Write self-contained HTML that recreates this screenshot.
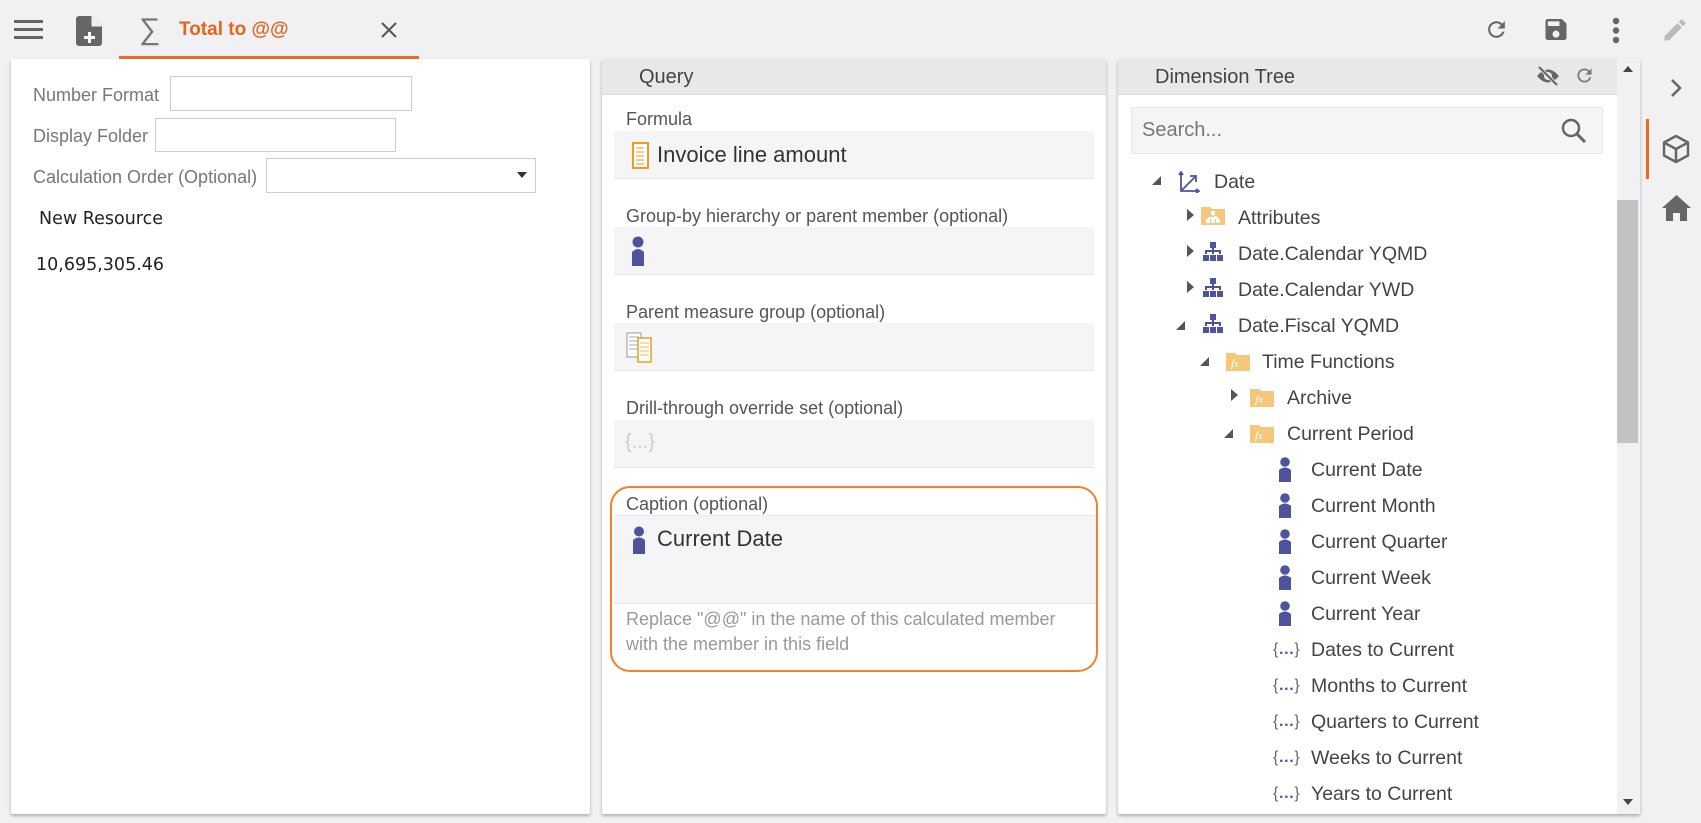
<!DOCTYPE html>
<html><head><meta charset="utf-8"><style>
*{box-sizing:border-box;margin:0;padding:0}
body{width:1701px;height:823px;background:#f1f0f2;font-family:"Liberation Sans",sans-serif;position:relative;overflow:hidden;color:#333}
.a{position:absolute}
.panel{position:absolute;background:#fff;box-shadow:0 2px 3px rgba(0,0,0,.28);border-radius:2px}
.hdr{position:absolute;left:0;right:0;top:0;height:36px;background:#e8e7ea;border-bottom:1px solid #dcdbde;font-size:20px;color:#444}
.lbl{position:absolute;font-size:18px;color:#777}
.inp{position:absolute;border:1px solid #ccc;background:#fff}
.ql{position:absolute;left:24px;font-size:18px;color:#555}
.qb{position:absolute;left:12px;width:480px;height:48px;background:#f5f4f7;border-bottom:1px solid #e6e5e8}
.row{position:absolute;font-size:19.5px;color:#444;white-space:nowrap;height:36px;line-height:36px}
.row svg{position:absolute}
.tri{position:absolute;width:0;height:0}
</style></head><body>

<svg class="a" style="left:14px;top:20px" width="29" height="20"><rect y="0" width="29" height="3" fill="#666"/><rect y="8" width="29" height="3" fill="#666"/><rect y="16" width="29" height="3" fill="#666"/></svg>
<svg class="a" style="left:76px;top:16px" width="26" height="30" viewBox="0 0 26 30"><path d="M3 0h13l10 10v17a3 3 0 0 1-3 3H3a3 3 0 0 1-3-3V3a3 3 0 0 1 3-3z" fill="#666"/><path d="M16 0v10h10" fill="#f1f0f2" stroke="#f1f0f2" stroke-width="1"/><rect x="8" y="20" width="11" height="3" fill="#fff"/><rect x="12" y="16" width="3" height="11" fill="#fff"/></svg>
<div class="a" style="left:139px;top:13px;font-size:30px;color:#777">∑</div>
<div class="a" style="left:179px;top:19px;font-size:19px;font-weight:bold;color:#e2661c">Total to @@</div>
<svg class="a" style="left:381px;top:22px" width="16" height="16"><path d="M1 1L15 15M15 1L1 15" stroke="#555" stroke-width="2"/></svg>
<div class="a" style="left:119px;top:56px;width:300px;height:3px;background:#ed6b21"></div>

<svg class="a" style="left:1484px;top:17px" width="25" height="25" viewBox="0 0 24 24"><path d="M17.6 6.4A8 8 0 1 0 19.7 14h-2.1A6 6 0 1 1 12 6c1.7 0 3.1.7 4.2 1.8L13 11h7V4z" fill="#666"/></svg>
<svg class="a" style="left:1542px;top:15px" width="28" height="29" viewBox="0 0 24 24"><path d="M17 3H5a2 2 0 0 0-2 2v14a2 2 0 0 0 2 2h14a2 2 0 0 0 2-2V7zm-5 16a3 3 0 1 1 0-6 3 3 0 0 1 0 6zm3-10H5V5h10z" fill="#666"/></svg>
<svg class="a" style="left:1612px;top:17px" width="8" height="27"><circle cx="4" cy="4" r="3.2" fill="#666"/><circle cx="4" cy="13.5" r="3.2" fill="#666"/><circle cx="4" cy="23" r="3.2" fill="#666"/></svg>
<svg class="a" style="left:1661px;top:15px" width="28" height="30" viewBox="0 0 24 24"><path d="M3 17.25V21h3.75L17.8 9.9l-3.7-3.7zM20.7 7a1 1 0 0 0 0-1.4l-2.3-2.3a1 1 0 0 0-1.4 0l-1.8 1.8 3.7 3.7z" fill="#bbb"/></svg>

<div class="panel" style="left:11px;top:59px;width:579px;height:755px">
 <div class="lbl" style="left:22px;top:26px">Number Format</div>
 <div class="inp" style="left:159px;top:17px;width:242px;height:35px"></div>
 <div class="lbl" style="left:22px;top:67px">Display Folder</div>
 <div class="inp" style="left:144px;top:59px;width:241px;height:34px"></div>
 <div class="lbl" style="left:22px;top:108px">Calculation Order (Optional)</div>
 <div class="inp" style="left:255px;top:99px;width:270px;height:35px"></div>
 <div class="tri" style="left:506px;top:113px;border-left:5px solid transparent;border-right:5px solid transparent;border-top:6px solid #333"></div>
 <div class="a" style="left:28px;top:150px;font-family:'DejaVu Sans',sans-serif;font-size:17.5px;color:#222">New Resource</div>
 <div class="a" style="left:25px;top:196px;font-family:'DejaVu Sans',sans-serif;font-size:17.5px;color:#222">10,695,305.46</div>
</div>

<div class="panel" style="left:602px;top:59px;width:504px;height:755px">
 <div class="hdr"><span class="a" style="left:37px;top:7px">Query</span></div>
 <div class="ql" style="top:50px">Formula</div>
 <div class="qb" style="top:72px">
  <svg class="a" style="left:18px;top:11px" width="18" height="27"><rect x="1" y="1" width="15" height="25" fill="#fff" stroke="#f29c1f" stroke-width="2"/><path d="M4 6h8M4 10h8M4 14h8M4 18h8M4 22h8" stroke="#f5b85a" stroke-width="1.5"/></svg>
  <span class="a" style="left:43px;top:11px;font-size:22px;color:#333">Invoice line amount</span>
 </div>
 <div class="ql" style="top:147px">Group-by hierarchy or parent member (optional)</div>
 <div class="qb" style="top:168px">
  <svg class="a" style="left:16px;top:9px" width="16" height="31"><circle cx="8" cy="6" r="5.5" fill="#4f539b"/><path d="M2 16q6-6 12 0v14H2z" fill="#4f539b"/></svg>
 </div>
 <div class="ql" style="top:243px">Parent measure group (optional)</div>
 <div class="qb" style="top:264px">
  <svg class="a" style="left:12px;top:9px" width="28" height="31"><rect x="1" y="1" width="14" height="24" fill="#fff" stroke="#999"/><path d="M3 5h10M3 9h10M3 13h10M3 17h10" stroke="#aaa"/><rect x="12" y="6" width="13" height="24" fill="#fff" stroke="#f29c1f" stroke-width="1.5"/><path d="M14 11h9M14 15h9M14 19h9M14 23h9" stroke="#f5b85a"/></svg>
 </div>
 <div class="ql" style="top:339px">Drill-through override set (optional)</div>
 <div class="qb" style="top:361px">
  <span class="a" style="left:11px;top:11px;font-size:20px;color:#ccc">{...}</span>
 </div>
 <div class="a" style="left:8px;top:427px;width:488px;height:186px;border:2px solid #f58025;border-radius:20px"></div>
 <div class="ql" style="top:435px">Caption (optional)</div>
 <div class="a" style="left:12px;top:456px;width:482px;height:89px;background:#f5f4f7;border-top:1px solid #e9e8eb;border-bottom:1px solid #e6e5e8">
  <svg class="a" style="left:17px;top:10px" width="16" height="28"><circle cx="8" cy="5.5" r="5" fill="#4f539b"/><path d="M2 14q6-5 12 0v14H2z" fill="#4f539b"/></svg>
  <span class="a" style="left:43px;top:10px;font-size:22px;color:#333">Current Date</span>
 </div>
 <div class="a" style="left:24px;top:548px;font-size:18px;color:#999;line-height:25px">Replace "@@" in the name of this calculated member<br>with the member in this field</div>
</div>

<div class="panel" style="left:1118px;top:59px;width:522px;height:755px;overflow:hidden">
 <div class="hdr"><span class="a" style="left:37px;top:7px">Dimension Tree</span>
  <svg class="a" style="left:418px;top:6px" width="24" height="22" viewBox="0 0 24 22"><path d="M1 11q11-13 22 0q-11 13-22 0z" fill="#666"/><circle cx="12" cy="11" r="4" fill="#e8e7ea"/><path d="M3 2l18 18" stroke="#e8e7ea" stroke-width="4"/><path d="M3 2l18 18" stroke="#666" stroke-width="2"/></svg>
  <svg class="a" style="left:456px;top:6px" width="21" height="21" viewBox="0 0 24 24"><path d="M17.6 6.4A8 8 0 1 0 19.7 14h-2.1A6 6 0 1 1 12 6c1.7 0 3.1.7 4.2 1.8L13 11h7V4z" fill="#777"/></svg>
 </div>
 <div class="a" style="left:13px;top:48px;width:472px;height:47px;background:#f5f4f7;border:1px solid #e8e7ea;border-radius:2px">
  <span class="a" style="left:10px;top:11px;font-size:20px;color:#777">Search...</span>
  <svg class="a" style="left:428px;top:9px" width="28" height="28"><circle cx="11" cy="11" r="8" fill="none" stroke="#666" stroke-width="2.5"/><path d="M17 17l8 8" stroke="#666" stroke-width="3"/></svg>
 </div>
 <div class="a" style="left:499px;top:0;width:23px;height:755px;background:#f1f0f2"></div>
 <div class="a" style="left:499px;top:141px;width:21px;height:243px;background:#c2c1c4"></div>
 <div class="tri" style="left:505px;top:7px;border-left:5px solid transparent;border-right:5px solid transparent;border-bottom:6px solid #444"></div>
 <div class="tri" style="left:505px;top:740px;border-left:5px solid transparent;border-right:5px solid transparent;border-top:6px solid #444"></div>
</div>

<div class="a" style="left:1118px;top:59px;width:500px;height:755px;overflow:hidden">
 <div class="tri" style="left:34px;top:117px;border-left:9px solid transparent;border-bottom:9px solid #555"></div>
 <svg class="a" style="left:60px;top:112px" width="22" height="22"><path d="M3 1v19h18M3 20L18 5M1 4l2-3 2 3M18 18l3 2-3 2M12 5h6v6" fill="none" stroke="#4f539b" stroke-width="1.8"/></svg>
 <div class="row" style="left:96px;top:105px">Date</div>
 <div class="tri" style="left:69px;top:150px;border-top:6px solid transparent;border-bottom:6px solid transparent;border-left:7px solid #555"></div>
 <svg class="a" style="left:83px;top:146px" width="24" height="20"><path d="M0 2h9l2 2h13v16H0z" fill="#f4c77a"/><path d="M10 6h4v4h-4zM11 10h2v2h-6v2h10v-2" fill="#fff"/><rect x="5" y="14" width="4" height="4" fill="#fff"/><rect x="10" y="14" width="4" height="4" fill="#fff"/><rect x="15" y="14" width="4" height="4" fill="#fff"/></svg>
 <div class="row" style="left:120px;top:141px">Attributes</div>
 <div class="tri" style="left:69px;top:186px;border-top:6px solid transparent;border-bottom:6px solid transparent;border-left:7px solid #555"></div>
 <svg class="a" style="left:83px;top:182px" width="24" height="22"><rect x="9" y="1" width="6" height="6" fill="#4f539b"/><path d="M12 7v3M5 13v-3h14v3M12 10v3" stroke="#4f539b" stroke-width="2" fill="none"/><rect x="2" y="14" width="6" height="6" fill="#4f539b"/><rect x="9" y="14" width="6" height="6" fill="#4f539b"/><rect x="16" y="14" width="6" height="6" fill="#4f539b"/></svg>
 <div class="row" style="left:120px;top:177px">Date.Calendar YQMD</div>
 <div class="tri" style="left:69px;top:222px;border-top:6px solid transparent;border-bottom:6px solid transparent;border-left:7px solid #555"></div>
 <svg class="a" style="left:83px;top:218px" width="24" height="22"><rect x="9" y="1" width="6" height="6" fill="#4f539b"/><path d="M12 7v3M5 13v-3h14v3M12 10v3" stroke="#4f539b" stroke-width="2" fill="none"/><rect x="2" y="14" width="6" height="6" fill="#4f539b"/><rect x="9" y="14" width="6" height="6" fill="#4f539b"/><rect x="16" y="14" width="6" height="6" fill="#4f539b"/></svg>
 <div class="row" style="left:120px;top:213px">Date.Calendar YWD</div>
 <div class="tri" style="left:58px;top:262px;border-left:9px solid transparent;border-bottom:9px solid #555"></div>
 <svg class="a" style="left:83px;top:254px" width="24" height="22"><rect x="9" y="1" width="6" height="6" fill="#4f539b"/><path d="M12 7v3M5 13v-3h14v3M12 10v3" stroke="#4f539b" stroke-width="2" fill="none"/><rect x="2" y="14" width="6" height="6" fill="#4f539b"/><rect x="9" y="14" width="6" height="6" fill="#4f539b"/><rect x="16" y="14" width="6" height="6" fill="#4f539b"/></svg>
 <div class="row" style="left:120px;top:249px">Date.Fiscal YQMD</div>
 <div class="tri" style="left:82px;top:298px;border-left:9px solid transparent;border-bottom:9px solid #555"></div>
 <svg class="a" style="left:108px;top:291px" width="24" height="21"><path d="M0 3h9l2 2h13v16H0z" fill="#f4c77a"/><text x="5" y="17" font-size="11" font-style="italic" fill="#fff" font-family="Liberation Serif">fx</text></svg>
 <div class="row" style="left:144px;top:285px">Time Functions</div>
 <div class="tri" style="left:113px;top:330px;border-top:6px solid transparent;border-bottom:6px solid transparent;border-left:7px solid #555"></div>
 <svg class="a" style="left:132px;top:327px" width="24" height="21"><path d="M0 3h9l2 2h13v16H0z" fill="#f4c77a"/><text x="5" y="17" font-size="11" font-style="italic" fill="#fff" font-family="Liberation Serif">fx</text></svg>
 <div class="row" style="left:169px;top:321px">Archive</div>
 <div class="tri" style="left:106px;top:370px;border-left:9px solid transparent;border-bottom:9px solid #555"></div>
 <svg class="a" style="left:132px;top:363px" width="24" height="21"><path d="M0 3h9l2 2h13v16H0z" fill="#f4c77a"/><text x="5" y="17" font-size="11" font-style="italic" fill="#fff" font-family="Liberation Serif">fx</text></svg>
 <div class="row" style="left:169px;top:357px">Current Period</div>
 <svg class="a" style="left:160px;top:398px" width="14" height="25"><circle cx="7" cy="5" r="4.8" fill="#4f539b"/><path d="M1 13q6-5 12 0v12H1z" fill="#4f539b"/></svg>
 <div class="row" style="left:193px;top:393px">Current Date</div>
 <svg class="a" style="left:160px;top:434px" width="14" height="25"><circle cx="7" cy="5" r="4.8" fill="#4f539b"/><path d="M1 13q6-5 12 0v12H1z" fill="#4f539b"/></svg>
 <div class="row" style="left:193px;top:429px">Current Month</div>
 <svg class="a" style="left:160px;top:470px" width="14" height="25"><circle cx="7" cy="5" r="4.8" fill="#4f539b"/><path d="M1 13q6-5 12 0v12H1z" fill="#4f539b"/></svg>
 <div class="row" style="left:193px;top:465px">Current Quarter</div>
 <svg class="a" style="left:160px;top:506px" width="14" height="25"><circle cx="7" cy="5" r="4.8" fill="#4f539b"/><path d="M1 13q6-5 12 0v12H1z" fill="#4f539b"/></svg>
 <div class="row" style="left:193px;top:501px">Current Week</div>
 <svg class="a" style="left:160px;top:542px" width="14" height="25"><circle cx="7" cy="5" r="4.8" fill="#4f539b"/><path d="M1 13q6-5 12 0v12H1z" fill="#4f539b"/></svg>
 <div class="row" style="left:193px;top:537px">Current Year</div>
 <div class="row" style="left:155px;top:573px;font-size:16px;color:#666">{<span style="color:#4f539b;font-weight:bold">…</span>}</div>
 <div class="row" style="left:193px;top:573px">Dates to Current</div>
 <div class="row" style="left:155px;top:609px;font-size:16px;color:#666">{<span style="color:#4f539b;font-weight:bold">…</span>}</div>
 <div class="row" style="left:193px;top:609px">Months to Current</div>
 <div class="row" style="left:155px;top:645px;font-size:16px;color:#666">{<span style="color:#4f539b;font-weight:bold">…</span>}</div>
 <div class="row" style="left:193px;top:645px">Quarters to Current</div>
 <div class="row" style="left:155px;top:681px;font-size:16px;color:#666">{<span style="color:#4f539b;font-weight:bold">…</span>}</div>
 <div class="row" style="left:193px;top:681px">Weeks to Current</div>
 <div class="row" style="left:155px;top:717px;font-size:16px;color:#666">{<span style="color:#4f539b;font-weight:bold">…</span>}</div>
 <div class="row" style="left:193px;top:717px">Years to Current</div>
</div>

<svg class="a" style="left:1670px;top:78px" width="12" height="20"><path d="M2 2l8 8-8 8" fill="none" stroke="#666" stroke-width="2.5"/></svg>
<div class="a" style="left:1646px;top:119px;width:3px;height:60px;background:#ed6b21"></div>
<svg class="a" style="left:1662px;top:134px" width="28" height="30" viewBox="0 0 28 30"><path d="M14 2L26 8.5v13L14 28 2 21.5v-13zM2 8.5L14 15l12-6.5M14 15v13" fill="none" stroke="#666" stroke-width="2.5" stroke-linejoin="round"/></svg>
<svg class="a" style="left:1662px;top:195px" width="29" height="26" viewBox="0 0 29 26"><path d="M14.5 0L29 13h-4v13h-7v-8h-7v8H4V13H0z" fill="#666"/></svg>

</body></html>
